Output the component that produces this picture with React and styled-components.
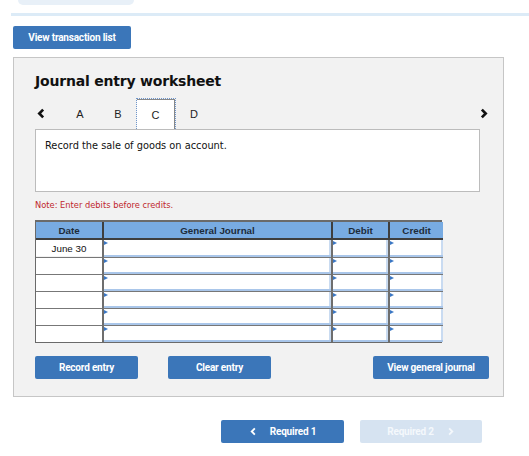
import React from "react";
import styled, { createGlobalStyle } from "styled-components";

const GlobalStyle = createGlobalStyle`
  body {
    margin: 0;
    background: #ffffff;
    font-family: "DejaVu Sans", Verdana, sans-serif;
  }
`;

const Page = styled.div`
  width: 529px;
  height: 456px;
  overflow: hidden;
`;

const TopStub = styled.div`
  margin-left: 18px;
  width: 116px;
  height: 5px;
  background: #e8f0f8;
  border-radius: 0 0 6px 6px;
`;

const Divider = styled.div`
  margin: 8px 0 0 11px;
  height: 3px;
  background: #dcebf7;
`;

const BlueButton = styled.button`
  display: flex;
  align-items: center;
  justify-content: center;
  gap: 12px;
  height: 23px;
  width: ${(p) => p.$w}px;
  padding: 0;
  border: none;
  border-radius: 2px;
  background: ${(p) => (p.$disabled ? "#d6e3f1" : "#3b76b9")};
  color: ${(p) => (p.$disabled ? "#f4f8fc" : "#ffffff")};
  font-family: Roboto, "Liberation Sans", sans-serif;
  font-weight: bold;
  font-size: 10px;
  letter-spacing: -0.2px;
  cursor: pointer;
`;

const TopButtonRow = styled.div`
  margin: 10px 0 0 13px;
`;

const Panel = styled.div`
  margin: 8px 0 0 13px;
  width: 445px;
  height: 338px;
  background: #f2f2f2;
  border: 1px solid #c6c6c6;
  padding: 0 23px 0 21px;
  box-sizing: content-box;
  display: flex;
  flex-direction: column;
`;

const Title = styled.h1`
  margin: 14px 0 0 0;
  font-family: "DejaVu Sans", Verdana, sans-serif;
  font-size: 14px;
  font-weight: bold;
  color: #111;
  line-height: 18px;
  letter-spacing: -0.2px;
`;

const TabRow = styled.div`
  margin: 8px -9px 0 0;
  height: 31px;
  display: flex;
  align-items: center;
`;

const Arrow = styled.span`
  display: flex;
  align-items: center;
  justify-content: center;
  width: 12px;
`;

const Tab = styled.div`
  width: 38px;
  height: 31px;
  display: flex;
  align-items: center;
  justify-content: center;
  font-family: "Liberation Sans", Arial, sans-serif;
  font-size: 11px;
  color: #222;
  box-sizing: border-box;
  ${(p) =>
    p.$active &&
    `
    background: #fff;
    border-top: 1px solid #888;
    border-right: 1px solid #888;
    outline: 1px dotted #6f96cc;
    margin-top: 1px;
  `}
`;

const Tabs = styled.div`
  display: flex;
  align-items: center;
  margin-left: 14px;
  flex: 1;
`;

const PromptBox = styled.div`
  width: 445px;
  height: 63px;
  background: #fff;
  border: 1px solid #bcbcbc;
  padding: 10px 9px 0;
  box-sizing: border-box;
  font-size: 9.8px;
  color: #111;
`;

const Note = styled.div`
  margin-top: 8px;
  font-size: 8.3px;
  color: #c0282d;
`;

const Table = styled.div`
  margin-top: 10px;
  width: 407px;
  display: grid;
  grid-template-columns: 66px 229px 57px 55px;
  border: 1px solid #6a6a6a;
  border-top: 2px solid #6a6a6a;
  box-sizing: border-box;
`;

const HeadCell = styled.div`
  height: 16px;
  background: #78abe2;
  display: flex;
  align-items: center;
  justify-content: center;
  font-family: "Liberation Sans", Arial, sans-serif;
  font-weight: bold;
  font-size: 9.8px;
  color: #1d2b3a;
  border-left: ${(p) => (p.$first ? "none" : "2px solid #3e3e3e")};
  border-bottom: 2px solid #3e3e3e;
  box-sizing: content-box;
`;

const DateCell = styled.div`
  height: 16px;
  background: #fff;
  display: flex;
  align-items: center;
  justify-content: center;
  font-family: "Liberation Sans", Arial, sans-serif;
  font-size: 9.8px;
  color: #111;
  border-top: ${(p) => (p.$first ? "none" : "1px solid #777")};
`;

const InputCell = styled.div`
  position: relative;
  height: 17px;
  background: #fff;
  border-left: 2px solid #6e6e6e;
  border-top: ${(p) => (p.$first ? "none" : "1px solid #777")};
  box-sizing: border-box;
  box-shadow: inset 0 -2px 0 #a9c6ea, inset -2px 0 0 #c9dbf1;
  &::before {
    content: "";
    position: absolute;
    left: 0;
    top: 1px;
    border-left: 4px solid #3b77c4;
    border-top: 2.5px solid transparent;
    border-bottom: 2.5px solid transparent;
  }
`;

const ActionRow = styled.div`
  margin-top: 13px;
  display: flex;
  align-items: center;
  gap: 30px;
  width: 454px;
`;

const Spacer = styled.div`
  flex: 1;
`;

const BottomNav = styled.div`
  margin: 23px 0 0 221px;
  display: flex;
  gap: 16px;
`;

const Chevron = ({ dir = "left", size = 10, color = "#111", stroke = 2.4 }) => (
  <svg width={size} height={size} viewBox="0 0 10 10">
    <path
      d={dir === "left" ? "M6.5 1.5 L3 5 L6.5 8.5" : "M3.5 1.5 L7 5 L3.5 8.5"}
      fill="none"
      stroke={color}
      strokeWidth={stroke}
    />
  </svg>
);

const rows = ["June 30", "", "", "", "", ""];

export default function App() {
  return (
    <Page>
      <GlobalStyle />
      <TopStub />
      <Divider />
      <TopButtonRow>
        <BlueButton $w={118}>View transaction list</BlueButton>
      </TopButtonRow>
      <Panel>
        <Title>Journal entry worksheet</Title>
        <TabRow>
          <Arrow>
            <Chevron dir="left" size={11} />
          </Arrow>
          <Tabs>
            <Tab>A</Tab>
            <Tab>B</Tab>
            <Tab $active>C</Tab>
            <Tab>D</Tab>
          </Tabs>
          <Arrow>
            <Chevron dir="right" size={11} />
          </Arrow>
        </TabRow>
        <PromptBox>Record the sale of goods on account.</PromptBox>
        <Note>Note: Enter debits before credits.</Note>
        <Table>
          <HeadCell $first>Date</HeadCell>
          <HeadCell>General Journal</HeadCell>
          <HeadCell>Debit</HeadCell>
          <HeadCell>Credit</HeadCell>
          {rows.map((d, i) => (
            <React.Fragment key={i}>
              <DateCell $first={i === 0}>{d}</DateCell>
              <InputCell $first={i === 0} />
              <InputCell $first={i === 0} />
              <InputCell $first={i === 0} />
            </React.Fragment>
          ))}
        </Table>
        <ActionRow>
          <BlueButton $w={103}>Record entry</BlueButton>
          <BlueButton $w={103}>Clear entry</BlueButton>
          <Spacer />
          <BlueButton $w={116}>View general journal</BlueButton>
        </ActionRow>
      </Panel>
      <BottomNav>
        <BlueButton $w={123}>
          <Chevron dir="left" size={9} color="#fff" stroke={2} />
          Required 1
        </BlueButton>
        <BlueButton $w={122} $disabled>
          Required 2
          <Chevron dir="right" size={9} color="#f4f8fc" stroke={2} />
        </BlueButton>
      </BottomNav>
    </Page>
  );
}
